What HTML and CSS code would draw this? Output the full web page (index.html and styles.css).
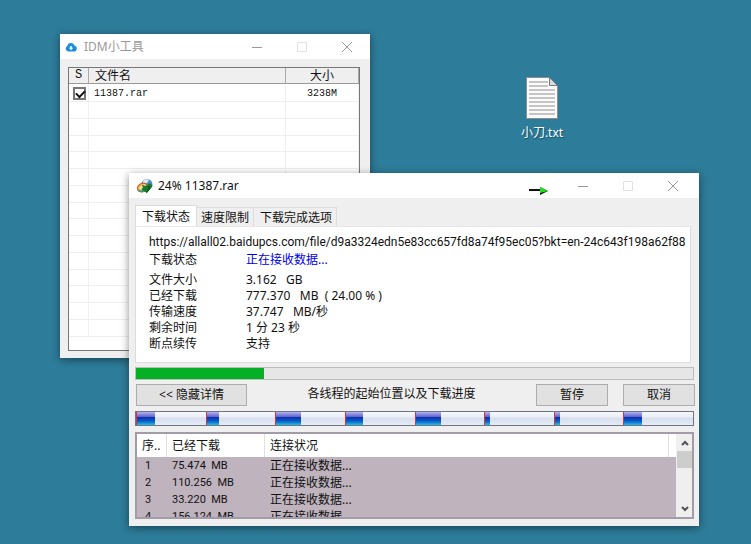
FILE: index.html
```html
<!DOCTYPE html>
<html lang="zh-CN">
<head>
  <meta charset="UTF-8" />
  <meta name="viewport" content="width=device-width, initial-scale=1.0"/>
  <title>24% 11387.rar</title>
  <link rel="stylesheet" href="styles.css">
</head>
<body>
  <main class="desktop">
    <!-- Desktop shortcut -->
    <a class="shortcut" href="#">
      <svg width="32" height="42" viewBox="0 0 32 42" aria-hidden="true">
        <path d="M.5 .5H23.5L31.5 8.5V41.5H.5Z" fill="#fafafa" stroke="#8c8c8c"/>
        <path d="M3 5H22M3 9H22M3 13H29M3 17H29M3 21H29M3 25H29M3 29H29M3 33H29M3 37H29" stroke="#b4b4b4" stroke-width="1.6"/>
        <path d="M23.5 .5V8.5H31.5Z" fill="#d8dade" stroke="#77797d"/>
      </svg>
      <span>小刀.txt</span>
    </a>

    <!-- Tool window -->
    <section class="window tool-window">
      <header class="title-bar">
        <svg width="12" height="12" viewBox="0 0 12 12" aria-hidden="true">
          <path d="M3 10.5A3 3 0 0 1 2.2 5A3.8 3.8 0 0 1 9.4 4.4A3.1 3.1 0 0 1 9.2 10.5Z" fill="#1a8fd8"/>
          <path d="M6 9.3L3.8 6.8H5.2V5H6.8V6.8H8.2Z" fill="#fff"/>
        </svg>
        <h1>IDM小工具</h1>
        <div class="window-buttons">
          <button type="button" aria-label="最小化"><svg width="12" height="12" viewBox="0 0 12 12"><path d="M1 6.5H11"/></svg></button>
          <button type="button" aria-label="最大化" disabled><svg width="12" height="12" viewBox="0 0 12 12"><path d="M1.500 1.500H10.500V10.500H1.500Z"/></svg></button>
          <button type="button" aria-label="关闭"><svg width="12" height="12" viewBox="0 0 12 12"><path d="M1 1L11 11M11 1L1 11"/></svg></button>
        </div>
      </header>
      <div class="file-list">
        <table>
          <thead>
            <tr><th class="col-check">S</th><th class="col-name">文件名</th><th class="col-size">大小</th></tr>
          </thead>
          <tbody>
            <tr class="file">
              <td><input type="checkbox" id="file1" checked></td>
              <td><label for="file1">11387.rar</label></td>
              <td class="size">3238M</td>
            </tr>
            <tr><td></td><td></td><td></td></tr>
            <tr><td></td><td></td><td></td></tr>
            <tr><td></td><td></td><td></td></tr>
            <tr><td></td><td></td><td></td></tr>
            <tr><td></td><td></td><td></td></tr>
            <tr><td></td><td></td><td></td></tr>
            <tr><td></td><td></td><td></td></tr>
            <tr><td></td><td></td><td></td></tr>
            <tr><td></td><td></td><td></td></tr>
            <tr><td></td><td></td><td></td></tr>
            <tr><td></td><td></td><td></td></tr>
            <tr><td></td><td></td><td></td></tr>
            <tr><td></td><td></td><td></td></tr>
            <tr><td></td><td></td><td></td></tr>
          </tbody>
        </table>
      </div>
    </section>

    <!-- Download window -->
    <section class="window download-window">
      <header class="title-bar">
        <svg width="16" height="16" viewBox="0 0 16 16" aria-hidden="true">
          <circle cx="10" cy="6.500" r="5.500" fill="#4c8fc9"/>
          <path d="M6 3Q9 0 12 2L10 5L6 6Z" fill="#dcebf5"/>
          <ellipse cx="5.500" cy="9.500" rx="5" ry="4" transform="rotate(-25 5.500 9.500)" fill="#f3e3b0" stroke="#d8522c" stroke-width="1.400"/>
          <path d="M2 12A4 4 0 0 1 7 7" fill="none" stroke="#f0b93a" stroke-width="1.400"/>
          <path d="M1 12Q4 14.500 9 12" fill="none" stroke="#4f9a74" stroke-width="2"/>
          <path d="M5 7L9 8L13 5L15.500 8L10 15L4 11L6 10Z" fill="#147a25"/>
          <path d="M9 14.500L12 12V8" fill="none" stroke="#163d1c"/>
        </svg>
        <h1>24% 11387.rar</h1>
        <svg class="speed-arrow" width="20" height="10" viewBox="0 0 20 10" aria-hidden="true">
          <path d="M0 4H12" stroke="#111" stroke-width="2"/>
          <path d="M11 1L19 5L11 9Z" fill="#111"/>
          <path d="M11 1L19 5L11 7Z" fill="#1fe01f"/>
        </svg>
        <div class="window-buttons">
          <button type="button" aria-label="最小化"><svg width="12" height="12" viewBox="0 0 12 12"><path d="M1 6.5H11"/></svg></button>
          <button type="button" aria-label="最大化" disabled><svg width="12" height="12" viewBox="0 0 12 12"><path d="M1.500 1.500H10.500V10.500H1.500Z"/></svg></button>
          <button type="button" aria-label="关闭"><svg width="12" height="12" viewBox="0 0 12 12"><path d="M1 1L11 11M11 1L1 11"/></svg></button>
        </div>
      </header>

      <div class="content">
        <nav class="tabs" role="tablist">
          <button type="button" role="tab" class="tab active" aria-selected="true">下载状态</button>
          <button type="button" role="tab" class="tab">速度限制</button>
          <button type="button" role="tab" class="tab">下载完成选项</button>
        </nav>
        <div class="panel">
          <p class="url">https://allall02.baidupcs.com/file/d9a3324edn5e83cc657fd8a74f95ec05?bkt=en-24c643f198a62f88</p>
          <dl class="details">
            <dt class="status">下载状态</dt><dd class="status">正在接收数据...</dd>
            <dt>文件大小</dt><dd>3.162&nbsp;&nbsp; GB</dd>
            <dt>已经下载</dt><dd>777.370&nbsp;&nbsp; MB&nbsp; ( 24.00 % )</dd>
            <dt>传输速度</dt><dd>37.747&nbsp;&nbsp; MB/秒</dd>
            <dt>剩余时间</dt><dd>1 分 23 秒</dd>
            <dt>断点续传</dt><dd>支持</dd>
          </dl>
        </div>

        <progress class="progress" value="23" max="100" aria-label="下载进度"></progress>

        <div class="actions">
          <button type="button" class="btn btn-wide">&lt;&lt; 隐藏详情</button>
          <span class="caption">各线程的起始位置以及下载进度</span>
          <button type="button" class="btn">暂停</button>
          <button type="button" class="btn">取消</button>
        </div>

        <div class="segments">
          <div class="segment"><div class="fill" style="width: 28%"></div></div>
          <div class="segment"><div class="fill" style="width: 19%"></div></div>
          <div class="segment"><div class="fill" style="width: 37%"></div></div>
          <div class="segment"><div class="fill" style="width: 26%"></div></div>
          <div class="segment"><div class="fill" style="width: 38%"></div></div>
          <div class="segment"><div class="fill" style="width: 9%"></div></div>
          <div class="segment"><div class="fill" style="width: 9%"></div></div>
          <div class="segment"><div class="fill" style="width: 27%"></div></div>
        </div>

        <div class="threads">
          <div class="threads-view">
            <table>
              <thead>
                <tr><th class="col-no">序..</th><th class="col-done">已经下载</th><th>连接状况</th><th class="col-end"></th></tr>
              </thead>
              <tbody>
                <tr><td class="no">1</td><td class="done">75.474&nbsp; MB</td><td colspan="2">正在接收数据...</td></tr>
                <tr><td class="no">2</td><td class="done">110.256&nbsp; MB</td><td colspan="2">正在接收数据...</td></tr>
                <tr><td class="no">3</td><td class="done">33.220&nbsp; MB</td><td colspan="2">正在接收数据...</td></tr>
                <tr><td class="no">4</td><td class="done">156.124&nbsp; MB</td><td colspan="2">正在接收数据...</td></tr>
              </tbody>
            </table>
          </div>
          <div class="scrollbar">
            <button type="button" aria-label="向上滚动"><svg width="8" height="8" viewBox="0 0 8 8"><path d="M1 6L4 3L7 6"/></svg></button>
            <div class="thumb"></div>
            <button type="button" class="down" aria-label="向下滚动"><svg width="8" height="8" viewBox="0 0 8 8"><path d="M1 2L4 5L7 2"/></svg></button>
          </div>
        </div>
      </div>
    </section>
  </main>
</body>
</html>
```

FILE: styles.css
```css
* {
  box-sizing: border-box;
  margin: 0;
  padding: 0;
}

body {
  font-family: "Noto Sans", "Noto Sans CJK SC", sans-serif;
  font-size: 12px;
  line-height: 16px;
  color: #111;
  background-color: #2d7c99;
}

button {
  font: inherit;
  color: inherit;
  border: none;
  background: none;
}

table {
  width: 100%;
  border-collapse: separate;
  border-spacing: 0;
  table-layout: fixed;
}

th {
  font-weight: normal;
  text-align: left;
}

.desktop {
  position: relative;
  min-height: 100vh;
  overflow: hidden;
}

.shortcut {
  position: absolute;
  left: 512px;
  top: 77px;
  width: 60px;
  display: flex;
  flex-direction: column;
  align-items: center;
  gap: 6px;
  color: #fff;
  text-decoration: none;
  text-shadow: 1px 1px 1px #1d4f62;
}

/* Windows */
.window {
  position: absolute;
  background-color: #efefef;
  box-shadow: 0 2px 8px rgba(0, 0, 0, 0.45);
}

.tool-window {
  left: 60px;
  top: 34px;
  width: 310px;
}

.download-window {
  left: 129px;
  top: 173px;
  width: 570px;
}

.title-bar {
  display: flex;
  align-items: center;
  gap: 7px;
  height: 25px;
  padding: 0 17px 0 5px;
  background-color: #fff;
}

.title-bar h1 {
  flex: 1;
  font-size: 12px;
  font-weight: normal;
}

.tool-window h1 {
  color: #999;
}

.download-window .title-bar {
  padding: 0 20px 0 8px;
  gap: 5px;
}

.speed-arrow {
  margin: 10px 23px 0 0;
}

.window-buttons {
  display: flex;
  gap: 33px;
}

.window-buttons button {
  display: flex;
}

.window-buttons path {
  fill: none;
  stroke: #999;
}

.window-buttons button:disabled path {
  stroke: #e2e2e2;
}

/* File list */
.file-list {
  margin: 8px 10px 7px 8px;
  height: 284px;
  border: 1px solid #777;
  background-color: #fff;
  overflow: hidden;
}

.file-list th {
  height: 16px;
  line-height: 15px;
  padding-left: 6px;
  background-color: #efefef;
  border-right: 1px solid #aaa;
  border-bottom: 1px solid #999;
}

.file-list .col-check {
  width: 20px;
  font-family: "Liberation Mono", monospace;
}

.file-list .col-size {
  width: 73px;
  padding-left: 0;
  text-align: center;
}

.file-list td {
  height: 17px;
  line-height: 16px;
  padding-left: 5px;
  border-right: 1px solid #f0f0f0;
  border-bottom: 1px solid #eee;
  font-family: "Liberation Mono", monospace;
  font-size: 10px;
}

.file-list .file td {
  height: 18px;
  padding-top: 2px;
  line-height: 15px;
}

.file-list tr:nth-child(4n) td {
  height: 16px;
}

.file-list td:first-child {
  padding-left: 4px;
}

.file-list .size {
  padding-left: 0;
  text-align: center;
}

.file-list input {
  appearance: none;
  display: block;
  width: 13px;
  height: 13px;
  border: 2px solid #777;
  background-color: #fff;
}

.file-list input:checked::before {
  content: "";
  display: block;
  width: 7px;
  height: 4px;
  margin-top: 1px;
  margin-left: 1px;
  border-left: 2px solid #111;
  border-bottom: 2px solid #111;
  transform: rotate(-45deg);
}

/* Download window */
.content {
  padding: 7px 5px 7px 6px;
}

.tabs {
  display: flex;
  align-items: flex-end;
}

.tab {
  height: 19px;
  padding: 0 4px;
  line-height: 19px;
  border: 1px solid #dcdcdc;
  border-left: none;
  border-bottom: none;
}

.tab.active {
  height: 21px;
  padding: 0 6px;
  border-left: 1px solid #dcdcdc;
  background-color: #fff;
}

.tab:last-child {
  padding: 0 4px 0 6px;
}

.panel {
  margin-right: 3px;
  height: 137px;
  padding: 7px 2px 0 13px;
  border: 1px solid #dcdcdc;
  border-top-color: #e8e8e8;
  background-color: #fff;
}

.url {
  font-family: Roboto, sans-serif;
  white-space: nowrap;
  overflow: hidden;
}

.details {
  display: grid;
  grid-template-columns: 97px 1fr;
}

.details .status {
  height: 22px;
  padding-top: 2px;
}

dd.status {
  color: #0000e6;
}

.progress {
  appearance: none;
  display: block;
  width: 100%;
  height: 13px;
  margin: 4px 0;
  border: 1px solid #bcbcbc;
  background-color: #e6e6e6;
}

.progress::-webkit-progress-bar {
  background-color: #e6e6e6;
}

.progress::-webkit-progress-value {
  background-color: #06b025;
}

.actions {
  display: flex;
  gap: 15px;
  margin: 0 -1px 0 1px;
}

.btn {
  width: 72px;
  height: 22px;
  line-height: 20px;
  border: 1px solid #adadad;
  background-color: #e1e1e1;
}

.btn-wide {
  width: 111px;
}

.caption {
  flex: 1;
  text-align: center;
  line-height: 20px;
}

.segments {
  display: flex;
  height: 15px;
  margin-top: 5px;
  border: 1px solid #6f7588;
  background: linear-gradient(#f6f8fd 0, #e9edf6 40%, #d7deec 45%, #e4ebf6 100%);
}

.segment {
  flex: 1;
}

.fill {
  height: 100%;
  border-left: 1px solid #e03030;
  background: linear-gradient(#b5b2ee 0, #6668cf 35%, #0c33b0 42%, #0a5cc8 70%, #20c0e0 100%);
}

/* Thread list */
.threads {
  display: flex;
  height: 87px;
  margin-top: 6px;
  border: 2px solid #a19ca8;
  background-color: #efefef;
}

.threads-view {
  flex: 1;
  margin-right: 1px;
  background-color: #bfb3bd;
  overflow: hidden;
}

.threads th {
  height: 23px;
  padding-left: 5px;
  background-color: #fff;
  border-right: 1px solid #e0e0e0;
}

.threads .col-no {
  width: 30px;
  white-space: nowrap;
}

.threads .col-done {
  width: 98px;
}

.threads .col-end {
  width: 7px;
  padding: 0;
  border-right: none;
}

.threads td {
  height: 17px;
  padding-left: 5px;
}

.threads .no,
.threads .done {
  font-family: Roboto, sans-serif;
  font-size: 11px;
}

.threads .no {
  padding-left: 8px;
}

.scrollbar {
  display: flex;
  flex-direction: column;
  width: 15px;
}

.scrollbar button {
  display: flex;
  align-items: center;
  justify-content: center;
  height: 17px;
}

.scrollbar path {
  fill: none;
  stroke: #555;
  stroke-width: 2;
}

.scrollbar .thumb {
  height: 17px;
  background-color: #cdcdcd;
}

.scrollbar .down {
  margin-top: auto;
}
```
